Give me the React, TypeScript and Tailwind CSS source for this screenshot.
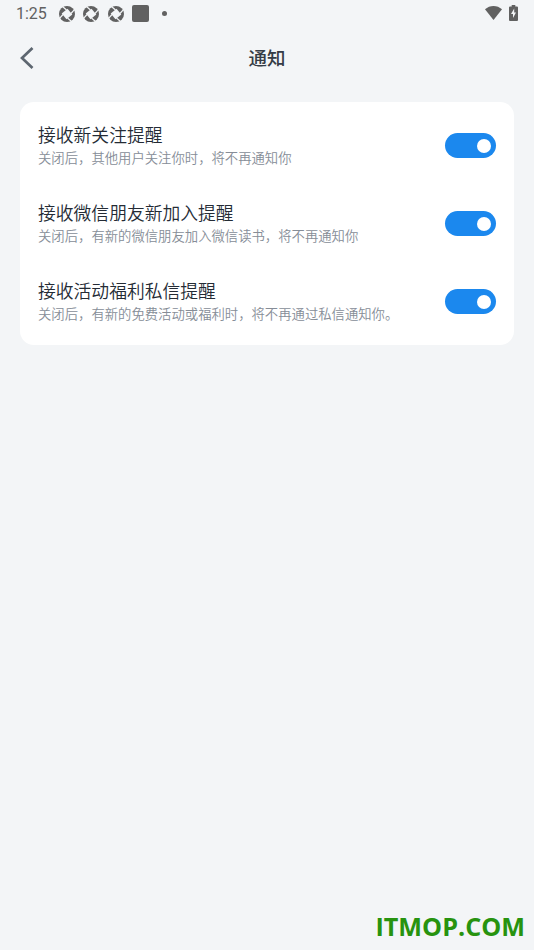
import React from 'react';

interface NotifySetting {
  id: string;
  title: string;
  description: string;
}

const settings: NotifySetting[] = [
  {
    id: 'follow',
    title: '接收新关注提醒',
    description: '关闭后，其他用户关注你时，将不再通知你',
  },
  {
    id: 'friend',
    title: '接收微信朋友新加入提醒',
    description: '关闭后，有新的微信朋友加入微信读书，将不再通知你',
  },
  {
    id: 'promo',
    title: '接收活动福利私信提醒',
    description: '关闭后，有新的免费活动或福利时，将不再通过私信通知你。',
  },
];

const ApertureIcon = () => (
  <svg className="h-4 w-4" viewBox="0 0 16 16">
    <circle cx="8" cy="8" r="8" fill="#616161" />
    <path d="M8.500 2.700 13.300 8.500 7.500 13.300 2.700 7.500Z" fill="#f3f5f7" />
    <g fill="none" stroke="#f3f5f7" strokeWidth="1.2">
      <path d="M7.500 4 3.800 0.800" />
      <path d="M12 7.500 15.200 3.800" />
      <path d="M8.500 12 12.200 15.200" />
      <path d="M4 8.500 0.800 12.200" />
    </g>
  </svg>
);

const StatusBar = () => (
  <div className="flex h-[27px] items-center pl-4 pr-4 text-[#616161]">
    <span className="w-[43px] font-['Roboto',sans-serif] text-base">1:25</span>
    <div className="flex items-center gap-[8.4px]">
      <ApertureIcon />
      <ApertureIcon />
      <ApertureIcon />
      <div className="h-[17px] w-[17px] rounded-[2px] bg-[#616161]" />
    </div>
    <div className="ml-[13px] h-[5px] w-[5px] rounded-full bg-[#616161]" />
    <div className="ml-auto flex items-center gap-[7px]">
      <svg className="mb-0.5 h-[14px] w-[17px]" viewBox="0 0 17 14" fill="currentColor">
        <path d="M8.5 14 0 3.3C2.4 1.2 5.3 0 8.5 0s6.1 1.2 8.5 3.3Z" />
      </svg>
      <svg className="mb-0.5 h-4 w-[9px]" viewBox="0 0 9 16">
        <path d="M2.7 0h3.6v1.5H8a1 1 0 0 1 1 1V15a1 1 0 0 1-1 1H1a1 1 0 0 1-1-1V2.500a1 1 0 0 1 1-1h1.700Z" fill="currentColor" />
        <path d="M5.200 3.500 2 9h2v4l3-5.500H5.200Z" fill="#f3f5f7" />
      </svg>
    </div>
  </div>
);

const Toggle = ({ label }: { label: string }) => (
  <button
    type="button"
    role="switch"
    aria-checked="true"
    aria-label={label}
    className="mt-px flex h-[25px] w-[51px] shrink-0 items-center justify-end rounded-full bg-[#1b88ee] pr-[5px]"
  >
    <span className="h-[14px] w-[14px] rounded-full bg-white" />
  </button>
);

const App = () => {
  return (
    <div className="relative h-[950px] w-[534px] overflow-hidden bg-[#f3f5f7] font-['Noto_Sans_CJK_SC',sans-serif]">
      <StatusBar />
      <header className="grid h-[62px] grid-cols-[1fr_auto_1fr] items-center px-5">
        <svg className="h-[22px] w-[14px]" viewBox="0 0 14 22" fill="none" stroke="#5d6670" strokeWidth="2.7">
          <path d="M12.500 1 2 11l10.500 10" />
        </svg>
        <h1 className="text-[18.5px] font-medium text-[#353c46]">通知</h1>
      </header>
      <main className="mx-5 mt-[13px] h-[243px] rounded-[14px] bg-white px-[18px] pt-1">
        {settings.map((item) => (
          <div key={item.id} className="flex h-[78px] items-center justify-between">
            <div className="whitespace-nowrap">
              <p className="-mt-px mb-px text-[17.8px] font-[350] leading-[25px] text-[#242b35]">{item.title}</p>
              <p className="text-[13.35px] font-[350] leading-5 text-[#868d97]">{item.description}</p>
            </div>
            <Toggle label={item.title} />
          </div>
        ))}
      </main>
      <div className="absolute bottom-1.5 right-[9px] font-['Open_Sans',sans-serif] text-[25.2px] font-bold leading-9 text-[#27930f]">
        ITMOP.COM
      </div>
    </div>
  );
};

export default App;
